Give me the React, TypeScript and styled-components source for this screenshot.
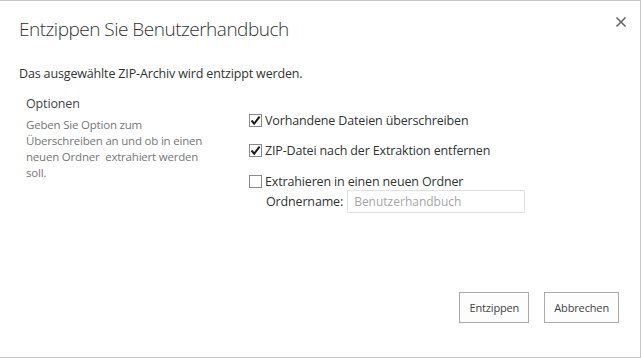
import styled, { createGlobalStyle } from "styled-components";

const GlobalStyle = createGlobalStyle`
  html, body {
    margin: 0;
    padding: 0;
    background: #ffffff;
  }
  body {
    font-family: "Open Sans", "Noto Sans", "Liberation Sans", sans-serif;
    color: #444444;
  }
`;

const Dialog = styled.div`
  box-sizing: border-box;
  width: 641px;
  height: 358px;
  border-top: 1px solid #c6c6c6;
  border-right: 1px solid #c6c6c6;
  border-bottom: 1px solid #c6c6c6;
  display: flex;
  flex-direction: column;
  background: #fff;
`;

const Header = styled.div`
  display: flex;
  justify-content: space-between;
  align-items: flex-start;
  padding: 13px 11px 0 19px;
`;

const Title = styled.h1`
  margin: 0;
  font-size: 19px;
  font-weight: 300;
  line-height: 30px;
  color: #333333;
  letter-spacing: -0.5px;
`;

const CloseButton = styled.button`
  border: none;
  background: none;
  padding: 0;
  margin-top: 2px;
  width: 14px;
  height: 14px;
  display: flex;
  cursor: pointer;
`;

const Intro = styled.p`
  margin: 21px 0 0 19px;
  font-size: 12.5px;
  line-height: 18px;
  color: #333333;
  letter-spacing: -0.15px;
`;

const Section = styled.div`
  display: flex;
  margin-top: 12px;
  padding-left: 26px;
`;

const SideColumn = styled.div`
  width: 223px;
  display: flex;
  flex-direction: column;
`;

const SectionLabel = styled.div`
  font-size: 12.5px;
  line-height: 18px;
  color: #444444;
  letter-spacing: -0.15px;
`;

const SectionHint = styled.div`
  margin-top: 4px;
  font-size: 11.5px;
  line-height: 16px;
  color: #777777;
  width: 190px;
  letter-spacing: -0.2px;
  white-space: pre-wrap;
`;

const OptionColumn = styled.div`
  display: flex;
  flex-direction: column;
  padding-top: 16px;
`;

const OptionRow = styled.label<{ $gap: number }>`
  display: flex;
  align-items: center;
  gap: 3px;
  height: 18px;
  margin-bottom: ${(p) => p.$gap}px;
  font-size: 12.5px;
  color: #333333;
  letter-spacing: -0.15px;
`;

const Box = styled.span`
  box-sizing: border-box;
  width: 13px;
  height: 13px;
  border: 1px solid #8a8a8a;
  display: flex;
  align-items: center;
  justify-content: center;
  background: #fff;
`;

const FolderRow = styled.div`
  display: flex;
  align-items: center;
  gap: 4px;
  padding-left: 17px;
  margin-top: -1px;
  font-size: 12.5px;
  color: #333333;
  letter-spacing: -0.15px;
`;

const FolderInput = styled.input`
  box-sizing: border-box;
  width: 178px;
  height: 23px;
  border: 1px solid #e1e1e1;
  padding: 0 6px;
  font-family: inherit;
  font-size: 12px;
  color: #a0a0a0;
  &::placeholder {
    color: #a6a6a6;
  }
`;

const Footer = styled.div`
  margin-top: auto;
  display: flex;
  justify-content: flex-end;
  gap: 15px;
  padding: 0 21px 34px 0;
`;

const Button = styled.button`
  box-sizing: border-box;
  height: 31px;
  padding: 0 9px;
  min-width: 70px;
  border: 1px solid #ababab;
  background: #fdfdfd;
  font-family: inherit;
  font-size: 11px;
  color: #444444;
  letter-spacing: -0.15px;
`;

function Checkbox({ checked }: { checked: boolean }) {
  return (
    <Box>
      {checked && (
        <svg width="11" height="11" viewBox="0 0 11 11">
          <path d="M1.5 5.5 L4.2 8.6 L9.6 1.6" fill="none" stroke="#1a1a1a" strokeWidth="2" />
        </svg>
      )}
    </Box>
  );
}

export default function App() {
  return (
    <>
      <GlobalStyle />
      <Dialog>
        <Header>
          <Title>Entzippen Sie Benutzerhandbuch</Title>
          <CloseButton aria-label="Schließen">
            <svg width="12" height="12" viewBox="0 0 12 12">
              <path d="M1.5 1.5 L10.5 10.5 M10.5 1.5 L1.5 10.5" stroke="#666" strokeWidth="1.6" />
            </svg>
          </CloseButton>
        </Header>
        <Intro>Das ausgewählte ZIP-Archiv wird entzippt werden.</Intro>
        <Section>
          <SideColumn>
            <SectionLabel>Optionen</SectionLabel>
            <SectionHint>
              {"Geben Sie Option zum\nÜberschreiben an und ob in einen\nneuen Ordner  extrahiert werden\nsoll."}
            </SectionHint>
          </SideColumn>
          <OptionColumn>
            <OptionRow $gap={12}>
              <Checkbox checked />
              Vorhandene Dateien überschreiben
            </OptionRow>
            <OptionRow $gap={13}>
              <Checkbox checked />
              ZIP-Datei nach der Extraktion entfernen
            </OptionRow>
            <OptionRow $gap={1}>
              <Checkbox checked={false} />
              Extrahieren in einen neuen Ordner
            </OptionRow>
            <FolderRow>
              Ordnername:
              <FolderInput placeholder="Benutzerhandbuch" />
            </FolderRow>
          </OptionColumn>
        </Section>
        <Footer>
          <Button>Entzippen</Button>
          <Button>Abbrechen</Button>
        </Footer>
      </Dialog>
    </>
  );
}
